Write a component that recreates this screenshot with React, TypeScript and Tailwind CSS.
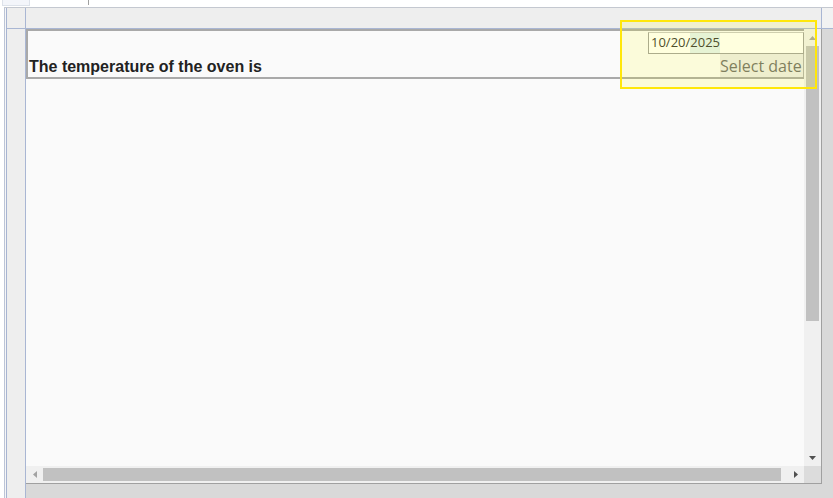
import React from 'react';

const Tri = ({ dir, color }: { dir: 'up' | 'down' | 'left' | 'right'; color: string }) => {
  const pts = {
    up: '0,4 3.5,0 7,4',
    down: '0,0 7,0 3.5,4',
    left: '4,0 4,7 0,3.5',
    right: '0,0 0,7 4,3.5',
  }[dir];
  const vertical = dir === 'up' || dir === 'down';
  return (
    <svg width={vertical ? 7 : 4} height={vertical ? 4 : 7} viewBox={vertical ? '0 0 7 4' : '0 0 4 7'}>
      <polygon points={pts} fill={color} />
    </svg>
  );
};

const App: React.FC = () => {
  return (
    <div className="relative w-[833px] h-[498px] overflow-hidden bg-white flex flex-col font-['Liberation_Sans',Arial,sans-serif]">
      {/* tab strip */}
      <div className="h-[7px] shrink-0 flex items-start">
        <div className="ml-[2px] w-[28px] h-[6px] bg-[#f3f5fa] border border-t-0 border-[#dde2ea]" />
        <div className="ml-[58px] w-px h-[5px] bg-[#a0a0a0]" />
      </div>

      <div className="flex-1 flex ml-[4px] border-t border-[#c4c8d0] min-h-0">
        <div className="w-px bg-[#bcc4d6]" />
        <div className="w-px bg-[#f6f6f6]" />
        <div className="w-px bg-[#a7b4d2]" />

        <div className="flex-1 flex flex-col min-h-0">
          {/* header row */}
          <div className="h-[21px] shrink-0 flex bg-[#eeeeee] border-b border-[#a9b6d3]">
            <div className="w-[18px]" />
            <div className="w-px bg-[#a9b6d3]" />
            <div className="w-[795px]" />
            <div className="w-px bg-[#a9b6d3]" />
            <div className="flex-1 bg-[#f2f2f2]" />
          </div>

          {/* body */}
          <div className="flex-1 flex min-h-0">
            <div className="w-[18px] bg-[#eeeeee]" />
            <div className="w-px bg-[#a9b6d3]" />
            <div className="w-[796px] flex flex-col bg-[#d9d9d9]">
              <div className="h-[455px] shrink-0 border-r border-b border-[#a0a0a0] bg-[#fafafa] flex flex-col">
                <div className="flex-1 flex min-h-0">
                  {/* scroll area */}
                  <div className="w-[778px]">
                    <div className="h-[50px] border-2 border-r-0 border-[#a9a9a9] flex justify-between">
                      <div className="self-end pb-px pl-px text-[16px] leading-[18px] font-bold text-[#222]">
                        The temperature of the oven is
                      </div>
                      <div className="flex flex-col items-end pt-px font-['Open_Sans',sans-serif]">
                        <div className="w-[156px] h-[22px] border border-[#a0a0a0] border-t-[#c8c8c8] bg-white flex items-center pl-[2px] text-[13px] text-[#333]">
                          <span>10/20/</span>
                          <span className="bg-[#e2f1f4]">2025</span>
                        </div>
                        <div className="w-[84px] h-[23px] bg-[#ececec] border-r border-[#b0b0b0] flex items-center text-[16px] leading-[20px] text-[#6c6c6c]">
                          Select date
                        </div>
                      </div>
                    </div>
                  </div>
                  {/* vertical scrollbar */}
                  <div className="w-[17px] bg-[#f0f0f0] flex flex-col">
                    <div className="h-[17px] flex items-center justify-center">
                      <Tri dir="up" color="#a3a3a3" />
                    </div>
                    <div className="ml-[2px] w-[13px] h-[275px] bg-[#c1c1c1]" />
                    <div className="flex-1" />
                    <div className="h-[17px] flex items-center justify-center">
                      <Tri dir="down" color="#505050" />
                    </div>
                  </div>
                </div>
                {/* horizontal scrollbar */}
                <div className="h-[17px] shrink-0 flex">
                  <div className="w-[778px] bg-[#f0f0f0] flex items-center">
                    <div className="w-[17px] h-full flex items-center justify-center">
                      <Tri dir="left" color="#a3a3a3" />
                    </div>
                    <div className="w-[738px] h-[13px] bg-[#c1c1c1]" />
                    <div className="flex-1" />
                    <div className="w-[17px] h-full flex items-center justify-center">
                      <Tri dir="right" color="#505050" />
                    </div>
                  </div>
                  <div className="w-[17px] bg-[#dcdcdc]" />
                </div>
              </div>
            </div>
            <div className="flex-1 bg-[#d9d9d9]" />
          </div>
        </div>
      </div>

      {/* highlight overlay */}
      <div className="absolute left-[620px] top-[20px] w-[197px] h-[69px] border-2 border-[#ffe70a] bg-[#ffff00]/[0.13]" />
    </div>
  );
};

export default App;
